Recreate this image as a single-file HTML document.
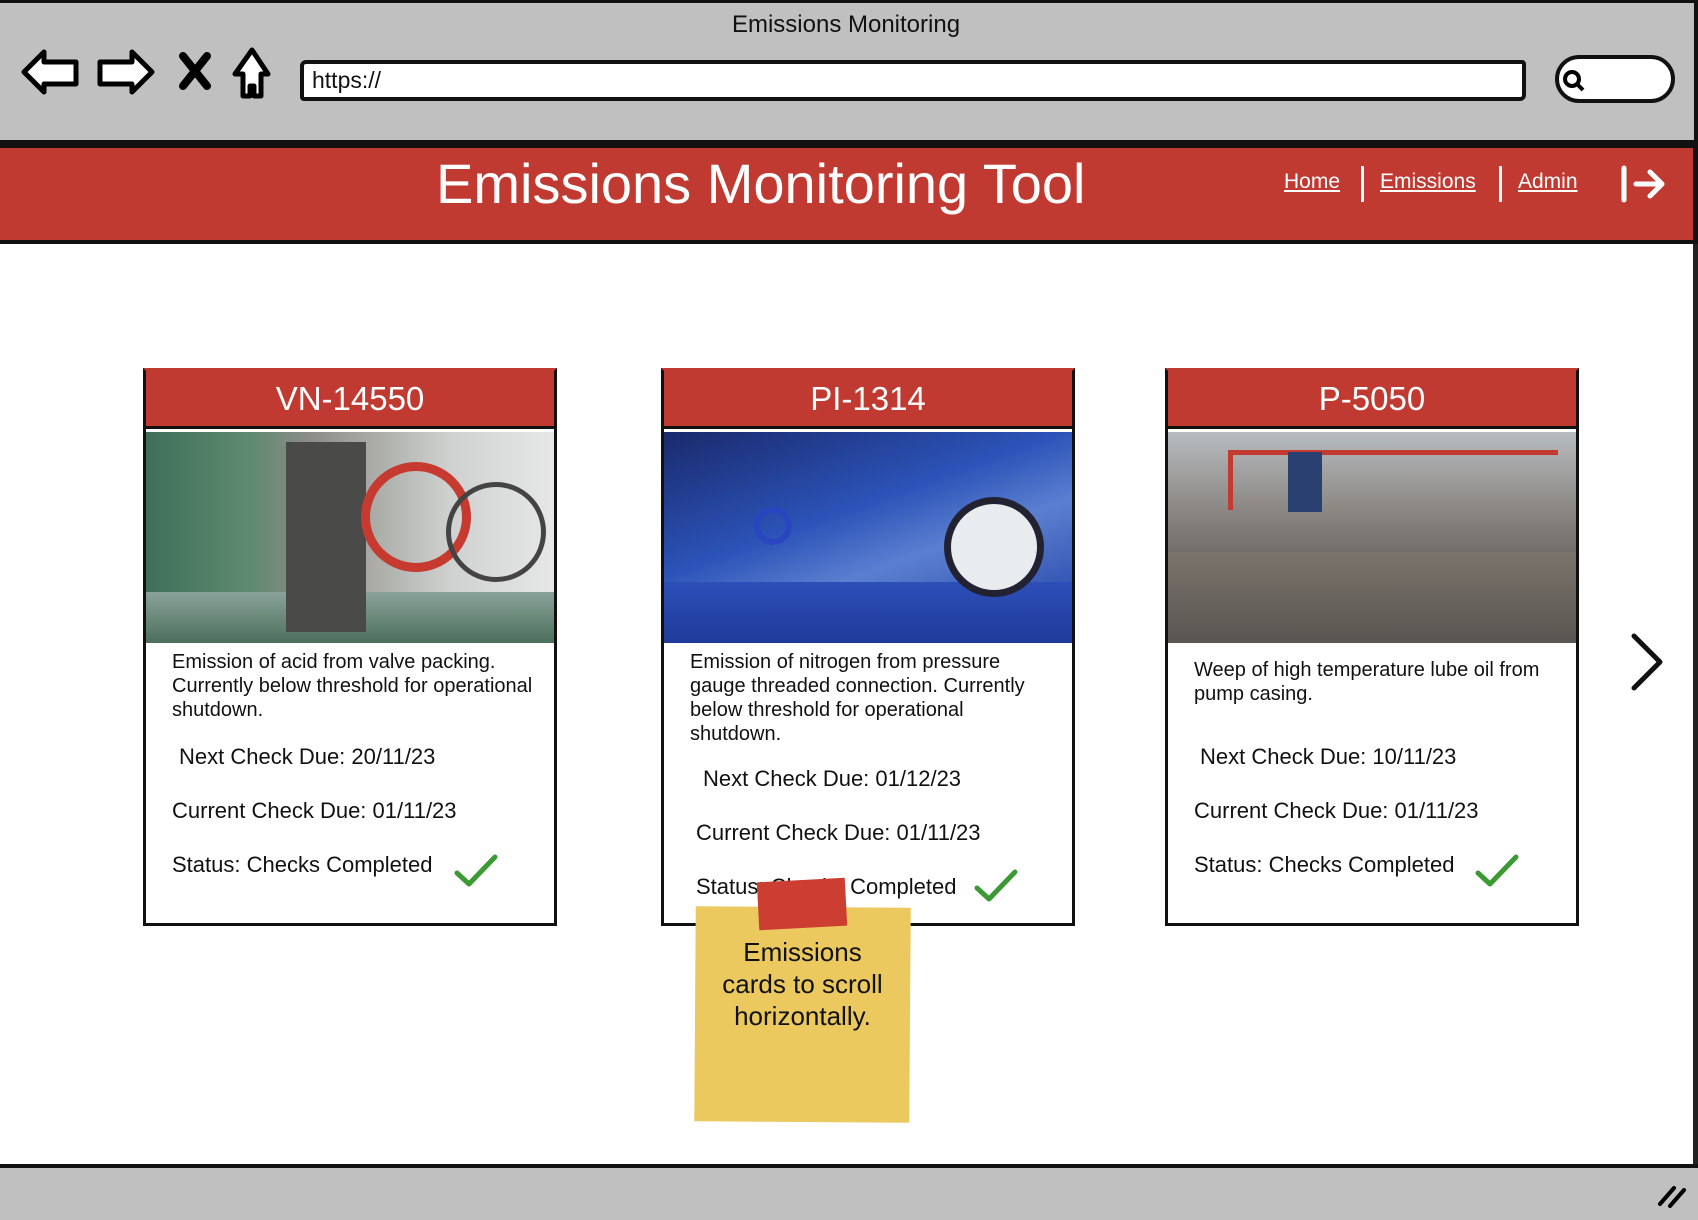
<!DOCTYPE html>
<html><head><meta charset="utf-8"><style>
*{margin:0;padding:0;box-sizing:border-box}
body{width:1698px;height:1220px;position:relative;overflow:hidden;background:#fff;font-family:"Liberation Sans",sans-serif;color:#111}
.abs{position:absolute}
.t{position:absolute;font-size:20px;white-space:nowrap;line-height:24px}
.s{font-size:22px}
.card{position:absolute;border:3px solid #111;border-top:none;background:#fff}
.ch{position:absolute;background:#c03a32;border:3px solid #111;border-top:3px solid #c03a32;color:#fff;font-size:33px;text-align:center;line-height:56px}
.img{position:absolute;overflow:hidden}
</style></head><body>
<div class="abs" style="left:0;top:0;width:1698px;height:148px;background:#c0c0c0;border-top:3px solid #111;border-right:4px solid #111"></div>
<div class="abs" style="left:0;top:140px;width:1698px;height:8px;background:#111"></div>
<div class="t" style="left:0;width:1692px;text-align:center;top:11px;font-size:24px;line-height:28px">Emissions Monitoring</div>
<svg class="abs" style="left:18px;top:44px" width="270" height="56" viewBox="0 0 270 56">
 <path d="M6 28 L26 8 L26 18 L58 18 L58 40 L26 40 L26 48 Z" fill="#fff" stroke="#000" stroke-width="5" stroke-linejoin="round"/>
 <path d="M134 28 L114 8 L114 18 L82 18 L82 40 L114 40 L114 48 Z" fill="#fff" stroke="#000" stroke-width="5" stroke-linejoin="round"/>
 <path d="M165 12 L189 42 M189 12 L165 42" stroke="#000" stroke-width="8" stroke-linecap="round"/>
 <path d="M234 6 L250 30 L243 30 L243 52 L236 52 L236 42 L232 42 L232 52 L225 52 L225 30 L217 30 Z" fill="#fff" stroke="#000" stroke-width="5" stroke-linejoin="round"/>
</svg>
<div class="abs" style="left:300px;top:60px;width:1226px;height:41px;background:#fff;border:4px solid #111;border-radius:6px 4px 6px 4px"></div>
<div class="t" style="left:312px;top:66px;font-size:23px;line-height:28px">https://</div>
<div class="abs" style="left:1555px;top:55px;width:120px;height:48px;background:#fff;border:4px solid #111;border-radius:26px"></div>
<svg class="abs" style="left:1560px;top:66px" width="30" height="30"><circle cx="12" cy="13" r="7" fill="none" stroke="#000" stroke-width="4"/><path d="M17 18 L23 24" stroke="#000" stroke-width="4"/></svg>
<div class="abs" style="left:0;top:148px;width:1698px;height:96px;background:#c03a32;border-bottom:4px solid #111;border-right:5px solid #111"></div>
<div class="t" style="left:436px;top:152px;font-size:56px;line-height:64px;color:#fff">Emissions Monitoring Tool</div>
<div class="t" style="left:1284px;top:170px;font-size:21px;color:#fff;text-decoration:underline">Home</div>
<div class="abs" style="left:1361px;top:166px;width:3px;height:36px;background:#fff"></div>
<div class="t" style="left:1380px;top:170px;font-size:21px;color:#fff;text-decoration:underline">Emissions</div>
<div class="abs" style="left:1499px;top:166px;width:3px;height:36px;background:#fff"></div>
<div class="t" style="left:1518px;top:170px;font-size:21px;color:#fff;text-decoration:underline">Admin</div>
<svg class="abs" style="left:1618px;top:164px" width="50" height="40"><path d="M6 4 L6 36" stroke="#fff" stroke-width="5" stroke-linecap="round"/><path d="M18 20 L44 20 M32 8 L44 20 L32 32" stroke="#fff" stroke-width="5" fill="none" stroke-linecap="round" stroke-linejoin="round"/></svg>
<div class="abs" style="left:1693px;top:244px;width:5px;height:930px;background:#222"></div>
<div class="abs" style="left:0;top:1164px;width:1698px;height:56px;background:#c0c0c0;border-top:4px solid #111"></div>
<svg class="abs" style="left:1656px;top:1180px" width="34" height="30"><path d="M4 24 L18 8 M14 26 L28 10" stroke="#000" stroke-width="4" stroke-linecap="round"/></svg>

<!-- card 1 -->
<div class="ch" style="left:143px;top:368px;width:414px;height:61px">VN-14550</div>
<div class="card" style="left:143px;top:429px;width:414px;height:497px"></div>
<div class="img" style="left:146px;top:432px;width:408px;height:211px;background:linear-gradient(90deg,#3f6f58 0%,#5d8a70 25%,#8c8c86 40%,#cfd2d0 75%,#e6e8e8 100%)">
 <div class="abs" style="left:0;top:160px;width:408px;height:51px;background:linear-gradient(#8aa39a,#4c6f5c)"></div>
 <div class="abs" style="left:140px;top:10px;width:80px;height:190px;background:#4a4a48"></div>
 <div class="abs" style="left:215px;top:30px;width:110px;height:110px;border:9px solid #c63a30;border-radius:50%"></div>
 <div class="abs" style="left:300px;top:50px;width:100px;height:100px;border:5px solid #444;border-radius:50%"></div>
</div>
<div class="t" style="left:172px;top:650px">Emission of acid from valve packing.</div>
<div class="t" style="left:172px;top:674px">Currently below threshold for operational</div>
<div class="t" style="left:172px;top:698px">shutdown.</div>
<div class="t s" style="left:179px;top:745px">Next Check Due: 20/11/23</div>
<div class="t s" style="left:172px;top:799px">Current Check Due: 01/11/23</div>
<div class="t s" style="left:172px;top:853px">Status: Checks Completed</div>
<svg class="abs" style="left:453px;top:853px" width="46" height="36"><path d="M4 20 L16 31 L42 4" stroke="#3c9a35" stroke-width="5" fill="none" stroke-linecap="round" stroke-linejoin="round"/></svg>

<!-- card 2 -->
<div class="ch" style="left:661px;top:368px;width:414px;height:61px">PI-1314</div>
<div class="card" style="left:661px;top:429px;width:414px;height:497px"></div>
<div class="img" style="left:664px;top:432px;width:408px;height:211px;background:linear-gradient(160deg,#1a2a6c 0%,#2b53b8 40%,#5b7fd0 60%,#1a3aa0 100%)">
 <div class="abs" style="left:0;top:150px;width:408px;height:61px;background:linear-gradient(#2d4fb8,#1f3a9a)"></div>
 <div class="abs" style="left:280px;top:65px;width:100px;height:100px;background:#e8ecef;border:7px solid #223;border-radius:50%"></div>
 <div class="abs" style="left:90px;top:75px;width:38px;height:38px;border:6px solid #2a45c0;border-radius:50%"></div>
</div>
<div class="t" style="left:690px;top:650px">Emission of nitrogen from pressure</div>
<div class="t" style="left:690px;top:674px">gauge threaded connection. Currently</div>
<div class="t" style="left:690px;top:698px">below threshold for operational</div>
<div class="t" style="left:690px;top:722px">shutdown.</div>
<div class="t s" style="left:703px;top:767px">Next Check Due: 01/12/23</div>
<div class="t s" style="left:696px;top:821px">Current Check Due: 01/11/23</div>
<div class="t s" style="left:696px;top:875px">Status: Checks Completed</div>
<svg class="abs" style="left:973px;top:868px" width="46" height="36"><path d="M4 20 L16 31 L42 4" stroke="#3c9a35" stroke-width="5" fill="none" stroke-linecap="round" stroke-linejoin="round"/></svg>

<!-- card 3 -->
<div class="ch" style="left:1165px;top:368px;width:414px;height:61px">P-5050</div>
<div class="card" style="left:1165px;top:429px;width:414px;height:497px"></div>
<div class="img" style="left:1168px;top:432px;width:408px;height:211px;background:linear-gradient(180deg,#b8bcc0 0%,#8d8a86 35%,#6e6a66 60%,#9a958e 100%)">
 <div class="abs" style="left:60px;top:18px;width:330px;height:5px;background:#c23a30"></div>
 <div class="abs" style="left:60px;top:18px;width:5px;height:60px;background:#c23a30"></div>
 <div class="abs" style="left:120px;top:20px;width:34px;height:60px;background:#2a4070"></div>
 <div class="abs" style="left:0;top:120px;width:408px;height:91px;background:linear-gradient(#7a746c,#5a5550)"></div>
</div>
<div class="t" style="left:1194px;top:658px">Weep of high temperature lube oil from</div>
<div class="t" style="left:1194px;top:682px">pump casing.</div>
<div class="t s" style="left:1200px;top:745px">Next Check Due: 10/11/23</div>
<div class="t s" style="left:1194px;top:799px">Current Check Due: 01/11/23</div>
<div class="t s" style="left:1194px;top:853px">Status: Checks Completed</div>
<svg class="abs" style="left:1474px;top:853px" width="46" height="36"><path d="M4 20 L16 31 L42 4" stroke="#3c9a35" stroke-width="5" fill="none" stroke-linecap="round" stroke-linejoin="round"/></svg>

<svg class="abs" style="left:1626px;top:632px" width="42" height="60"><path d="M8 4 L34 30 L8 56" stroke="#111" stroke-width="5" fill="none" stroke-linecap="round" stroke-linejoin="round"/></svg>

<div class="abs" style="left:695px;top:907px;width:215px;height:215px;background:#ebc95f;transform:rotate(0.4deg)"></div>
<div class="abs" style="left:758px;top:880px;width:88px;height:48px;background:#cc3e32;transform:rotate(-3deg)"></div>
<div class="t" style="left:685px;top:936px;width:235px;text-align:center;font-size:26px;line-height:32px;white-space:normal">Emissions<br>cards to scroll<br>horizontally.</div>
</body></html>
